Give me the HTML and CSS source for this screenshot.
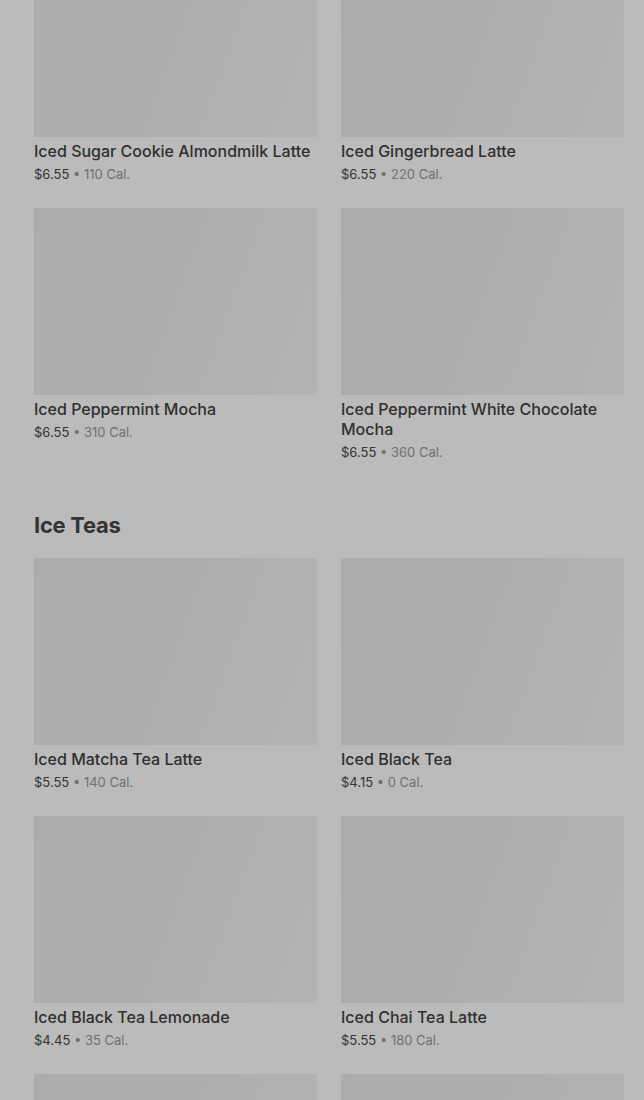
FILE: index.html
```html
<!DOCTYPE html>
<html lang="en">
<head>
  <meta charset="UTF-8">
  <title>Menu</title>
  <link rel="stylesheet" href="styles.css">
</head>
<body>
  <div class="menu">
    <section class="category">
      <div class="grid">
        <div class="item">
          <div class="thumb"></div>
          <div class="name">Iced Sugar Cookie Almondmilk Latte</div>
          <div class="meta"><span class="price">$6.55</span> • <span class="cal">110 Cal.</span></div>
        </div>
        <div class="item">
          <div class="thumb"></div>
          <div class="name">Iced Gingerbread Latte</div>
          <div class="meta"><span class="price">$6.55</span> • <span class="cal">220 Cal.</span></div>
        </div>
        <div class="item">
          <div class="thumb"></div>
          <div class="name">Iced Peppermint Mocha</div>
          <div class="meta"><span class="price">$6.55</span> • <span class="cal">310 Cal.</span></div>
        </div>
        <div class="item">
          <div class="thumb"></div>
          <div class="name">Iced Peppermint White Chocolate Mocha</div>
          <div class="meta"><span class="price">$6.55</span> • <span class="cal">360 Cal.</span></div>
        </div>
      </div>
    </section>

    <section class="category">
      <h2>Ice Teas</h2>
      <div class="grid">
        <div class="item">
          <div class="thumb"></div>
          <div class="name">Iced Matcha Tea Latte</div>
          <div class="meta"><span class="price">$5.55</span> • <span class="cal">140 Cal.</span></div>
        </div>
        <div class="item">
          <div class="thumb"></div>
          <div class="name">Iced Black Tea</div>
          <div class="meta"><span class="price">$4.15</span> • <span class="cal">0 Cal.</span></div>
        </div>
        <div class="item">
          <div class="thumb"></div>
          <div class="name">Iced Black Tea Lemonade</div>
          <div class="meta"><span class="price">$4.45</span> • <span class="cal">35 Cal.</span></div>
        </div>
        <div class="item">
          <div class="thumb"></div>
          <div class="name">Iced Chai Tea Latte</div>
          <div class="meta"><span class="price">$5.55</span> • <span class="cal">180 Cal.</span></div>
        </div>
        <div class="item">
          <div class="thumb"></div>
        </div>
        <div class="item">
          <div class="thumb"></div>
        </div>
      </div>
    </section>
  </div>
</body>
</html>
```

FILE: styles.css
```css
body {
  margin: 0;
  background: #bbbbbb;
  font-family: Inter, "Noto Sans", sans-serif;
  color: #2f2f2f;
  overflow: hidden;
}

.menu {
  margin-top: -50px;
  padding: 0 20px 0 34px;
}

.category {
  margin-bottom: 49px;
}

.category h2 {
  margin: 0 0 19px;
  font-size: 22px;
  line-height: 28px;
  font-weight: 700;
  letter-spacing: -0.3px;
  color: #333333;
}

.grid {
  display: grid;
  grid-template-columns: 283px 283px;
  column-gap: 24px;
  row-gap: 24px;
}

.thumb {
  height: 187px;
  background: linear-gradient(110deg, #acacac 0%, #adadad 45%, #b1b1b1 75%, #b3b3b3 100%);
}

.name {
  margin-top: 4px;
  font-size: 16px;
  line-height: 20px;
  font-weight: 500;
  color: #2f2f2f;
}

.meta {
  margin-top: 3px;
  font-size: 13px;
  line-height: 20px;
  color: #707070;
}

.price {
  color: #333333;
}
```
